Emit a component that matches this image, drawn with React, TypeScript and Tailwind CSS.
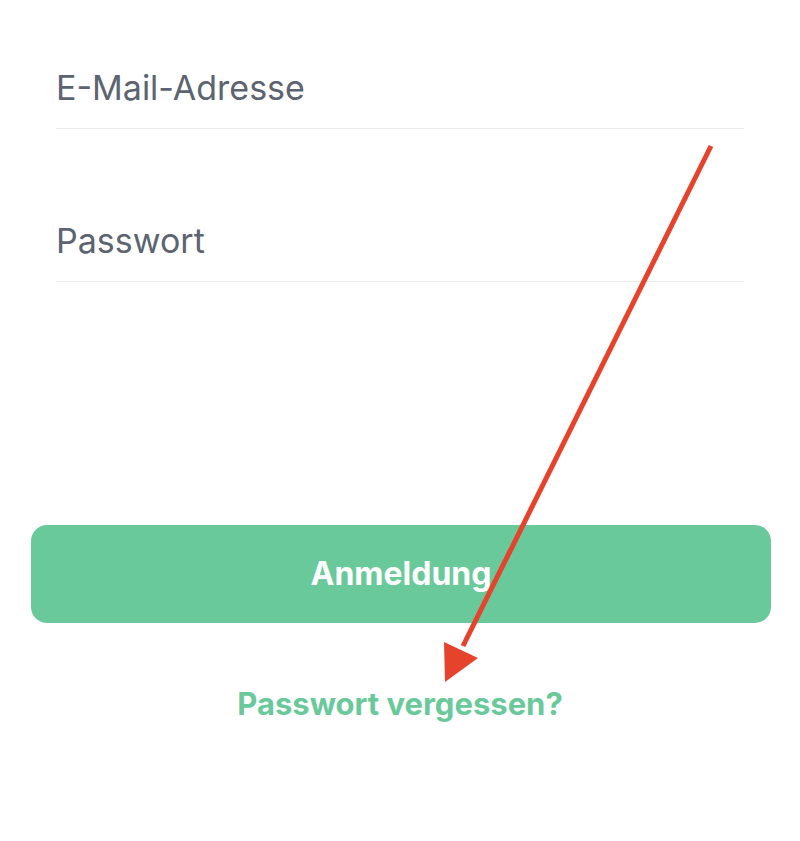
export default function App() {
  return (
    <div className="relative min-h-[841px] w-full bg-white font-['Inter','Noto_Sans',sans-serif]">
      <div className="px-[56px]">
        <div className="border-b border-[#ececec] pb-[20px] pt-[68px]">
          <div className="text-[34px] leading-[40px] text-[#5c6470]">E-Mail-Adresse</div>
        </div>
        <div className="border-b border-[#ececec] pb-[20px] pt-[92px]">
          <div className="text-[34px] leading-[40px] text-[#5c6470]">Passwort</div>
        </div>
      </div>

      <button className="ml-[31px] mt-[243px] flex h-[98px] w-[740px] items-center justify-center rounded-[16px] bg-[#6ac99b] text-[32px] font-bold text-white">
        Anmeldung
      </button>

      <div className="mt-[63px] text-center text-[31px] font-bold leading-[36px] text-[#6ac99b]">
        Passwort vergessen?
      </div>

      <svg className="pointer-events-none absolute left-0 top-0" width="800" height="841" viewBox="0 0 800 841">
        <line x1="711" y1="146" x2="463" y2="646" stroke="#e6432c" strokeWidth="5" />
        <polygon points="445,682 444,642 478,658" fill="#e6432c" />
      </svg>
    </div>
  );
}
